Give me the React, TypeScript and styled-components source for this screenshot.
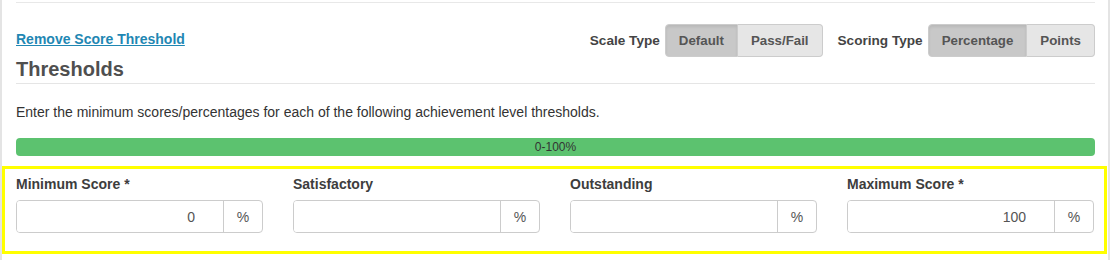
import * as React from 'react';
import styled, { createGlobalStyle } from 'styled-components';

const GlobalStyle = createGlobalStyle`
  html, body {
    margin: 0;
    padding: 0;
    background: #fff;
  }
  body {
    font-family: "Liberation Sans", Arial, sans-serif;
    font-size: 14px;
    color: #333;
  }
`;

const Frame = styled.div`
  width: 1106px;
  height: 260px;
  border-left: 2px solid #e4e4e4;
  border-right: 2px solid #e4e4e4;
  overflow: hidden;
`;

const Content = styled.div`
  margin: 0 13px 0 14px;
  padding-top: 2px;
`;

const Header = styled.div`
  display: flex;
  justify-content: space-between;
  align-items: flex-start;
  border-top: 1px solid #e8e8e8;
  border-bottom: 1px solid #e5e5e5;
`;

const TitleCol = styled.div`
  display: flex;
  flex-direction: column;
  align-items: flex-start;
  padding: 28px 0 3px;
`;

const RemoveLink = styled.a`
  font-size: 14px;
  line-height: 16px;
  font-weight: bold;
  color: #1f87b3;
  text-decoration: underline;
  cursor: pointer;
`;

const Title = styled.h2`
  margin: 11px 0 0;
  font-size: 20px;
  line-height: 22px;
  font-weight: bold;
  color: #4f4f4f;
`;

const Controls = styled.div`
  display: flex;
  align-items: center;
  margin-top: 21px;
`;

const ControlLabel = styled.span<{ $gap?: number }>`
  font-weight: bold;
  font-size: 13.6px;
  color: #444;
  margin-left: ${(p) => p.$gap ?? 0}px;
  margin-right: 5px;
`;

const ButtonGroup = styled.div`
  display: flex;
`;

const ToggleButton = styled.button<{ $active?: boolean }>`
  height: 33px;
  padding: 0 13px;
  font-family: inherit;
  font-size: 13.3px;
  font-weight: bold;
  color: #555;
  background: ${(p) => (p.$active ? '#c8c8c8' : '#e6e6e6')};
  border: 1px solid #ccc;
  box-shadow: ${(p) => (p.$active ? 'inset 0 2px 3px rgba(0,0,0,0.08)' : 'none')};
  cursor: pointer;

  &:first-child {
    border-radius: 4px 0 0 4px;
  }
  &:last-child {
    border-radius: 0 4px 4px 0;
    border-left: none;
  }
`;

const Intro = styled.p`
  margin: 19px 0 0;
  font-size: 14px;
  line-height: 18px;
  color: #333;
`;

const RangeBar = styled.div`
  margin-top: 17px;
  height: 18px;
  border-radius: 4px;
  background: #5cc26f;
  display: flex;
  align-items: center;
  justify-content: center;
  font-size: 12px;
  color: #333;
`;

const FieldsBox = styled.div`
  margin: 10px -12px 0 -14px;
  border: 3px solid #ffff00;
  padding: 7px 10px 18px 11px;
  display: grid;
  grid-template-columns: repeat(4, minmax(0, 1fr));
  column-gap: 30px;
`;

const Field = styled.div`
  display: flex;
  flex-direction: column;
  min-width: 0;
`;

const FieldLabel = styled.label`
  font-size: 14px;
  line-height: 16px;
  font-weight: bold;
  color: #3d3d3d;
  margin-bottom: 8px;
`;

const InputGroup = styled.div`
  display: flex;
  height: 33px;
  border: 1px solid #ccc;
  border-radius: 4px;
  box-sizing: border-box;
  overflow: hidden;
`;

const ScoreInput = styled.input`
  flex: 1;
  width: 0;
  min-width: 0;
  border: none;
  outline: none;
  padding: 0 28px 0 10px;
  text-align: right;
  font-family: inherit;
  font-size: 14px;
  color: #555;
  background: #fff;
`;

const Addon = styled.span`
  width: 38px;
  flex: none;
  border-left: 1px solid #ccc;
  display: flex;
  align-items: center;
  justify-content: center;
  font-size: 14px;
  color: #555;
`;

const fields = [
  { label: 'Minimum Score *', value: '0' },
  { label: 'Satisfactory', value: '' },
  { label: 'Outstanding', value: '' },
  { label: 'Maximum Score *', value: '100' },
];

export default function App() {
  const [scale, setScale] = React.useState('Default');
  const [scoring, setScoring] = React.useState('Percentage');

  return (
    <>
      <GlobalStyle />
      <Frame>
        <Content>
          <Header>
            <TitleCol>
              <RemoveLink>Remove Score Threshold</RemoveLink>
              <Title>Thresholds</Title>
            </TitleCol>
            <Controls>
              <ControlLabel>Scale Type</ControlLabel>
              <ButtonGroup>
                {['Default', 'Pass/Fail'].map((s) => (
                  <ToggleButton key={s} $active={scale === s} onClick={() => setScale(s)}>
                    {s}
                  </ToggleButton>
                ))}
              </ButtonGroup>
              <ControlLabel $gap={15}>Scoring Type</ControlLabel>
              <ButtonGroup>
                {['Percentage', 'Points'].map((s) => (
                  <ToggleButton key={s} $active={scoring === s} onClick={() => setScoring(s)}>
                    {s}
                  </ToggleButton>
                ))}
              </ButtonGroup>
            </Controls>
          </Header>
          <Intro>
            Enter the minimum scores/percentages for each of the following achievement level thresholds.
          </Intro>
          <RangeBar>0-100%</RangeBar>
          <FieldsBox>
            {fields.map((f) => (
              <Field key={f.label}>
                <FieldLabel>{f.label}</FieldLabel>
                <InputGroup>
                  <ScoreInput defaultValue={f.value} />
                  <Addon>%</Addon>
                </InputGroup>
              </Field>
            ))}
          </FieldsBox>
        </Content>
      </Frame>
    </>
  );
}
